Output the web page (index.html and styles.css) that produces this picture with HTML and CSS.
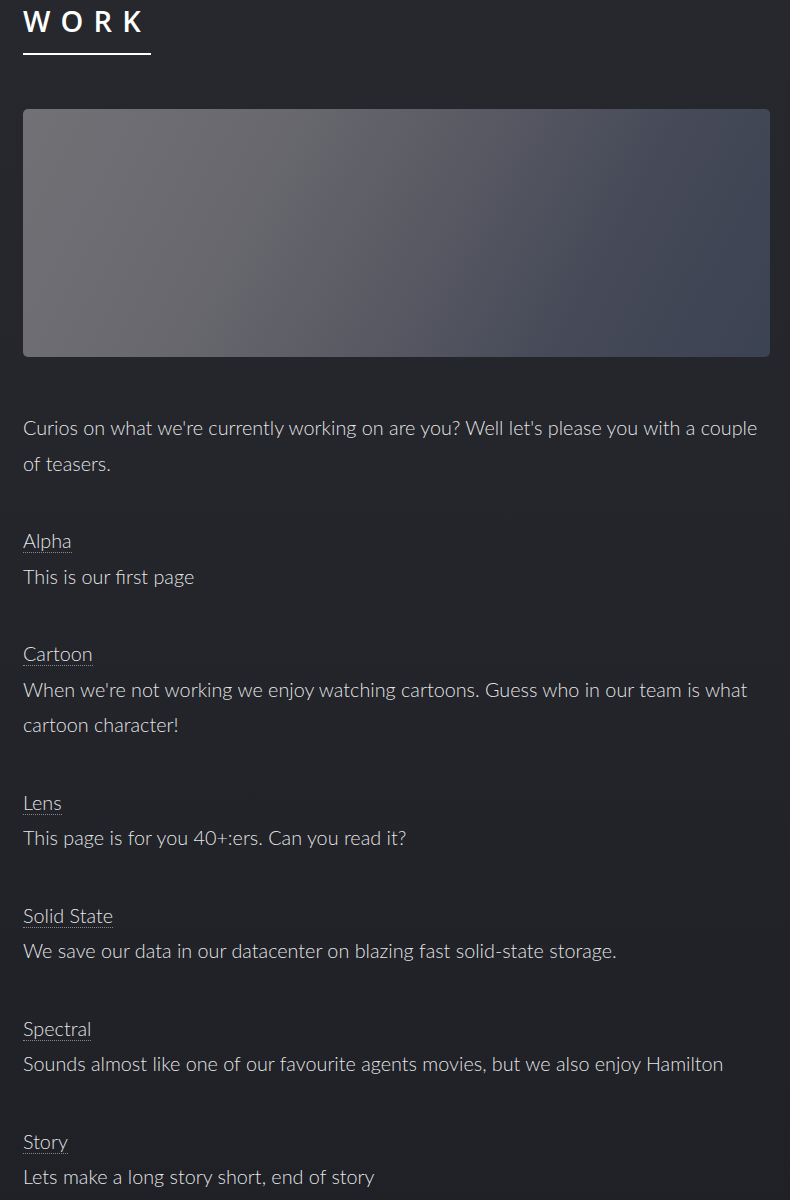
FILE: index.html
```html
<!DOCTYPE html>
<html lang="en">
<head>
<meta charset="utf-8">
<title>Work</title>
<link rel="stylesheet" href="styles.css">
</head>
<body>
<main class="page">
  <section class="work">
    <header class="major">
      <h2>Work</h2>
    </header>
    <div class="image"></div>
    <p class="intro">Curios on what we're currently working on are you? Well let's please you with a couple of teasers.</p>
    <dl class="projects">
      <div class="item"><dt><a href="#">Alpha</a></dt><dd>This is our first page</dd></div>
      <div class="item"><dt><a href="#">Cartoon</a></dt><dd>When we're not working we enjoy watching cartoons. Guess who in our team is what cartoon character!</dd></div>
      <div class="item"><dt><a href="#">Lens</a></dt><dd>This page is for you 40+:ers. Can you read it?</dd></div>
      <div class="item"><dt><a href="#">Solid State</a></dt><dd>We save our data in our datacenter on blazing fast solid-state storage.</dd></div>
      <div class="item"><dt><a href="#">Spectral</a></dt><dd>Sounds almost like one of our favourite agents movies, but we also enjoy Hamilton</dd></div>
      <div class="item"><dt><a href="#">Story</a></dt><dd>Lets make a long story short, end of story</dd></div>
    </dl>
  </section>
  <div class="footer-edge"></div>
</main>
</body>
</html>
```
FILE: styles.css
```css
html, body {
  margin: 0;
  padding: 0;
}
body {
  background: linear-gradient(180deg, #26282d 0%, #23252a 50%, #1f2126 100%);
  color: rgba(255, 255, 255, 0.9);
  font-family: Lato, "Liberation Sans", sans-serif;
  font-weight: 300;
  font-size: 19.8px;
  line-height: 35.5px;
  height: 1200px;
  overflow: hidden;
}
.page {
  display: flex;
  flex-direction: column;
  height: 1200px;
}
.work {
  flex: 1;
  padding: 0 20px 0 23px;
}
.major {
  margin-top: -5px;
}
.major h2 {
  display: inline-block;
  margin: 0;
  padding-bottom: 6px;
  border-bottom: 2px solid #ffffff;
  color: #ffffff;
  font-family: "Open Sans", "Liberation Sans", sans-serif;
  font-weight: 600;
  font-size: 29px;
  line-height: 52px;
  letter-spacing: 0.35em;
  text-transform: uppercase;
}
.image {
  margin-top: 54px;
  height: 248px;
  border-radius: 5px;
  background: linear-gradient(118deg, #717176 0%, #68686e 30%, #5a5a64 52%, #464a58 75%, #3b4252 100%);
}
.intro {
  margin: 53px 0 42px;
}
.projects {
  margin: 0;
}
.item {
  margin-bottom: 42px;
}
.projects dt,
.projects dd {
  margin: 0;
}
.projects a {
  color: rgba(255, 255, 255, 0.9);
  text-decoration: none;
  border-bottom: 1px dotted rgba(255, 255, 255, 0.45);
}
.footer-edge {
  height: 4px;
  background: #1a1a1d;
}
```
